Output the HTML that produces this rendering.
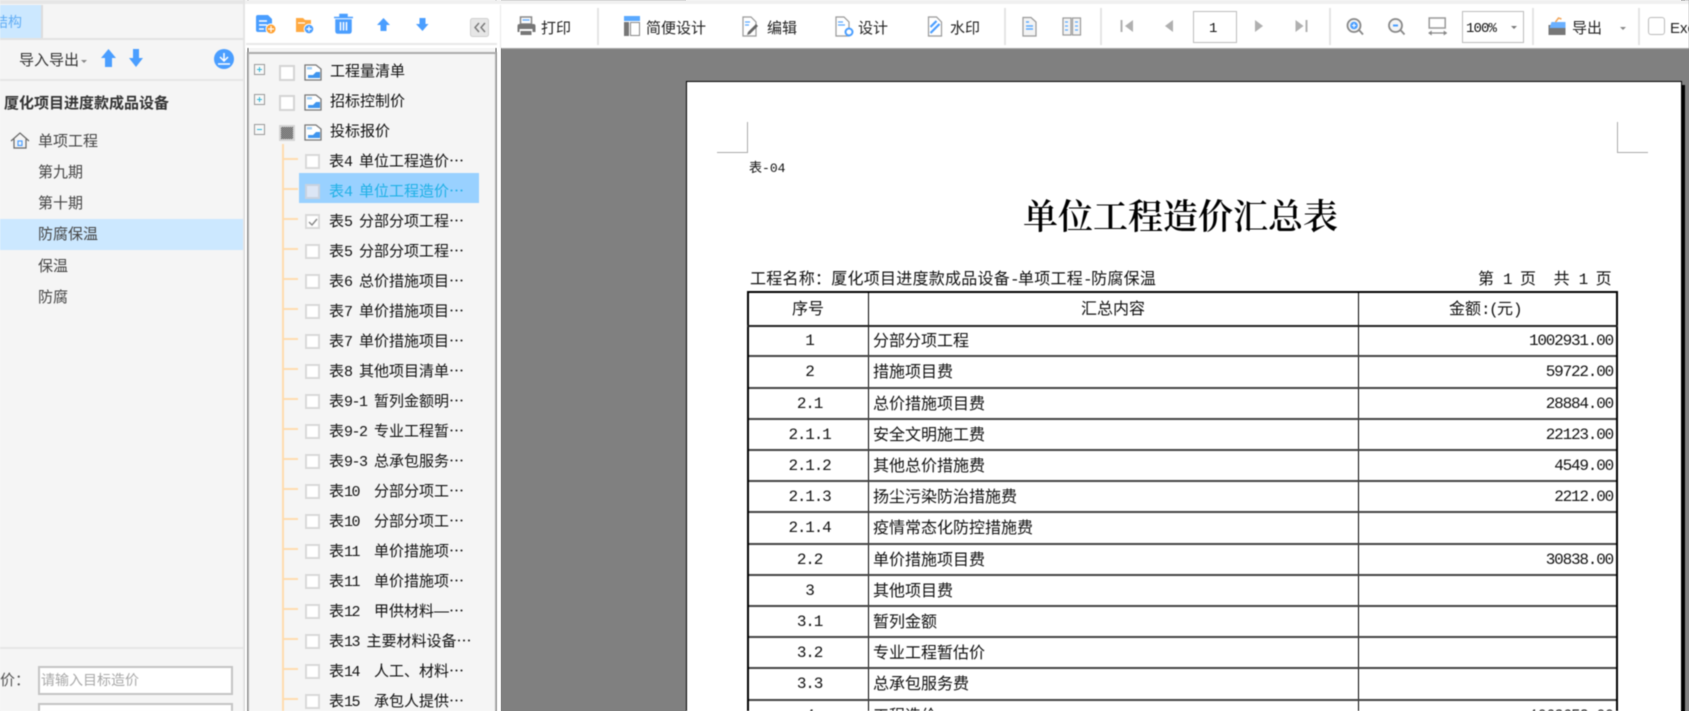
<!DOCTYPE html>
<html lang="zh-CN"><head><meta charset="utf-8"><title>单位工程造价汇总表</title>
<style>
html,body{margin:0;padding:0;width:1689px;height:711px;overflow:hidden;background:#fff}
#under{position:absolute;left:0;top:0;width:1689px;height:711px;background:linear-gradient(90deg,#f5f5f5 0 243px,#e4e4e4 243px 245px,#fff 245px 247px,#ababab 247px 249px,#f5f5f5 249px 495px,#ababab 495px 497px,#fff 497px 501px,#808080 501px 686px,#fff 686px 1681px,#000 1681px 1685px,#808080 1685px)}
#root{position:absolute;left:0;top:0;width:1689px;height:711px;overflow:hidden;font-family:"Liberation Sans","Noto Sans CJK SC",sans-serif;filter:blur(.4px)}
.a{position:absolute}
.t{position:absolute;white-space:pre;line-height:1;color:#333}
i{font-style:normal;font-family:"Liberation Mono",monospace;font-size:1em;letter-spacing:-.1em}
.f15{font-size:15px}.f13{font-size:15px;color:#222}
.row{position:absolute;left:282px;width:200px;height:30px}
.row:before{content:"";position:absolute;left:0;top:11px;width:16px;height:2px;background:#ffdcae}
.row .c{position:absolute;left:23px;top:7px;width:11px;height:11px;border:2px solid #d9d9d9;background:#fff}
.row .x{position:absolute;left:47px;top:7px;font-size:15px;line-height:15px;white-space:pre;color:#111}
.r{height:31.2px;position:relative}
.r span{position:absolute;top:1px;line-height:31.2px;white-space:pre;color:#111;font-size:16px}
.r span:nth-child(1),.r span:nth-child(3){font-family:"Liberation Mono",monospace;font-size:16px;letter-spacing:-1.2px}
.r span:nth-child(1){left:0;width:121px;text-align:center}
.r span:nth-child(2){left:124px}
.r span:nth-child(3){right:3px}
.r:after{content:"";position:absolute;left:0;right:0;bottom:-1px;height:2px;background:#444}
</style></head><body><div id="under"></div><div id="root">

<!-- panel backgrounds -->
<div class="a" style="left:0;top:0;width:243px;height:711px;background:#f5f5f5"></div>
<div class="a" style="left:0;top:0;width:243px;height:4px;background:#e6e6e6"></div>
<div class="a" style="left:243px;top:0;width:2px;height:711px;background:#e4e4e4"></div>
<div class="a" style="left:245px;top:0;width:1444px;height:4px;background:#f0f0f0"></div>
<div class="a" style="left:245px;top:4px;width:1444px;height:44px;background:#fff"></div>
<div class="a" style="left:0;top:5px;width:41px;height:33px;background:#cce8ff;border-right:2px solid #dcdcdc"></div>
<div class="a" style="left:0;top:38px;width:243px;height:2px;background:#e3e3e3"></div>
<div class="a" style="left:0;top:79px;width:243px;height:2px;background:#e6e6e6"></div>
<div class="a" style="left:0;top:219px;width:243px;height:31px;background:#cce8ff"></div>
<div class="a" style="left:0;top:647px;width:243px;height:2px;background:#e6e6e6"></div>

<div class="t" style="left:-6px;top:15px;font-size:14px;color:#63aef5">结构</div>
<div class="t f15" style="left:19px;top:53px">导入导出</div>
<div class="t f15" style="left:4px;top:96px;font-weight:700;color:#333">厦化项目进度款成品设备</div>
<div class="t f15" style="left:38px;top:134px;color:#444">单项工程</div>
<div class="t f15" style="left:38px;top:165px;color:#444">第九期</div>
<div class="t f15" style="left:38px;top:196px;color:#444">第十期</div>
<div class="t f15" style="left:38px;top:227px;color:#444">防腐保温</div>
<div class="t f15" style="left:38px;top:259px;color:#444">保温</div>
<div class="t f15" style="left:38px;top:290px;color:#444">防腐</div>
<div class="t f15" style="left:0;top:673px;color:#555">价：</div>
<div class="a" style="left:38px;top:666px;width:191px;height:25px;border:2px solid #c4c4c4;background:#fff"></div>
<div class="t" style="left:41px;top:673px;font-size:14px;color:#a8a8a8">请输入目标造价</div>
<div class="a" style="left:38px;top:703px;width:191px;height:6px;border:2px solid #c4c4c4;border-bottom:0;background:#fff;overflow:hidden"><div class="t" style="left:3px;top:4px;font-size:14px;color:#aaa;line-height:14px">1064651</div></div>

<!-- middle panel -->
<div class="a" style="left:246px;top:43px;width:251px;height:2px;background:#e8e8e8"></div>
<div class="a" style="left:247px;top:52px;width:246px;height:657px;border:2px solid #ababab;border-bottom:0;background:#f5f5f5"></div>
<div class="a" style="left:282px;top:144px;width:2px;height:567px;background:#ffdcae"></div>
<div class="t f15" style="left:330px;top:64px;color:#111">工程量清单</div>
<div class="t f15" style="left:330px;top:94px;color:#111">招标控制价</div>
<div class="t f15" style="left:330px;top:124px;color:#111">投标报价</div>
<div class="a" style="left:279px;top:65px;width:12px;height:12px;border:2px solid #d4d4d4;background:#fff"></div>
<div class="a" style="left:279px;top:95px;width:12px;height:12px;border:2px solid #d4d4d4;background:#fff"></div>
<div class="a" style="left:279px;top:125px;width:12px;height:12px;border:2px solid #d4d4d4;background:repeating-conic-gradient(#444 0 25%,#bbb 0 50%) 0 0/2px 2px"></div>
<div class="a" style="left:299px;top:173px;width:180px;height:30px;background:#99d1ff"></div>

<div class="row" style="top:147px"><div class="c"></div><div class="x">表<i>4 </i>单位工程造价⋯</div></div>
<div class="row" style="top:177px"><div class="c" style="background:#dce6f5;border-color:#c8d2e0"></div><div class="x" style="color:#1fb0e6">表<i>4 </i>单位工程造价⋯</div></div>
<div class="row" style="top:207px"><div class="c"></div><div class="x">表<i>5 </i>分部分项工程⋯</div></div>
<div class="row" style="top:237px"><div class="c"></div><div class="x">表<i>5 </i>分部分项工程⋯</div></div>
<div class="row" style="top:267px"><div class="c"></div><div class="x">表<i>6 </i>总价措施项目⋯</div></div>
<div class="row" style="top:297px"><div class="c"></div><div class="x">表<i>7 </i>单价措施项目⋯</div></div>
<div class="row" style="top:327px"><div class="c"></div><div class="x">表<i>7 </i>单价措施项目⋯</div></div>
<div class="row" style="top:357px"><div class="c"></div><div class="x">表<i>8 </i>其他项目清单⋯</div></div>
<div class="row" style="top:387px"><div class="c"></div><div class="x">表<i>9-1 </i>暂列金额明⋯</div></div>
<div class="row" style="top:417px"><div class="c"></div><div class="x">表<i>9-2 </i>专业工程暂⋯</div></div>
<div class="row" style="top:447px"><div class="c"></div><div class="x">表<i>9-3 </i>总承包服务⋯</div></div>
<div class="row" style="top:477px"><div class="c"></div><div class="x">表<i>10  </i>分部分项工⋯</div></div>
<div class="row" style="top:507px"><div class="c"></div><div class="x">表<i>10  </i>分部分项工⋯</div></div>
<div class="row" style="top:537px"><div class="c"></div><div class="x">表<i>11  </i>单价措施项⋯</div></div>
<div class="row" style="top:567px"><div class="c"></div><div class="x">表<i>11  </i>单价措施项⋯</div></div>
<div class="row" style="top:597px"><div class="c"></div><div class="x">表<i>12  </i>甲供材料—⋯</div></div>
<div class="row" style="top:627px"><div class="c"></div><div class="x">表<i>13 </i>主要材料设备⋯</div></div>
<div class="row" style="top:657px"><div class="c"></div><div class="x">表<i>14  </i>人工、材料⋯</div></div>
<div class="row" style="top:687px;height:24px"><div class="c"></div><div class="x">表<i>15  </i>承包人提供⋯</div></div>

<!-- report toolbar -->
<div class="a" style="left:500px;top:5px;width:1px;height:43px;background:#e8e8e8"></div>
<div class="a" style="left:501px;top:48px;width:1188px;height:663px;background:#808080"></div>
<div class="a" style="left:501px;top:48px;width:1188px;height:1px;background:#a4a4a4"></div>
<div class="a" style="left:597px;top:8px;width:2px;height:37px;background:#e4e4e4"></div>
<div class="a" style="left:1004px;top:8px;width:2px;height:37px;background:#e4e4e4"></div>
<div class="a" style="left:1100px;top:8px;width:2px;height:37px;background:#e4e4e4"></div>
<div class="a" style="left:1329px;top:8px;width:2px;height:37px;background:#e4e4e4"></div>
<div class="a" style="left:1532px;top:8px;width:2px;height:37px;background:#e4e4e4"></div>
<div class="a" style="left:1638px;top:8px;width:2px;height:37px;background:#e4e4e4"></div>
<div class="t f13" style="left:541px;top:21px">打印</div>
<div class="t f13" style="left:646px;top:21px">简便设计</div>
<div class="t f13" style="left:767px;top:21px">编辑</div>
<div class="t f13" style="left:858px;top:21px">设计</div>
<div class="t f13" style="left:950px;top:21px">水印</div>
<div class="a" style="left:1193px;top:11px;width:42px;height:30px;border:1px solid #bdbdbd;background:#fff"></div>
<div class="t" style="left:1209px;top:22px;font:14px/1 'Liberation Mono',monospace;color:#111">1</div>
<div class="a" style="left:1462px;top:11px;width:60px;height:30px;border:1px solid #bdbdbd;background:#fff"></div>
<div class="t" style="left:1466px;top:22px;font:14px/1 'Liberation Mono',monospace;color:#111;letter-spacing:-.9px">100%</div>
<div class="t f13" style="left:1572px;top:21px">导出</div>
<div class="a" style="left:1648px;top:17px;width:15px;height:16px;border:1px solid #bbb;border-radius:3px;background:#fff"></div>
<div class="t" style="left:1670px;top:21px;font-size:15px;color:#222">Excel</div>

<!-- page -->
<div class="a" style="left:686px;top:81px;width:994px;height:630px;background:#fff;border:1px solid #000;border-bottom:0"></div>
<div class="a" style="left:1681px;top:85px;width:4px;height:626px;background:#000"></div>
<div class="a" style="left:747px;top:122px;width:1px;height:31px;background:#aaa"></div>
<div class="a" style="left:717px;top:152px;width:31px;height:1px;background:#aaa"></div>
<div class="a" style="left:1617px;top:122px;width:1px;height:31px;background:#aaa"></div>
<div class="a" style="left:1617px;top:152px;width:31px;height:1px;background:#aaa"></div>
<div class="t" style="left:749px;top:161px;font-size:13px;color:#111">表<i style="letter-spacing:0">-04</i></div>
<div class="t" style="left:1023px;top:200px;font-size:35px;color:#000;font-family:'Liberation Serif','Noto Serif CJK SC',serif;font-weight:600">单位工程造价汇总表</div>
<div class="t" style="left:750px;top:272px;font-size:16px;letter-spacing:.25px;color:#111">工程名称：厦化项目进度款成品设备<i>-</i>单项工程<i>-</i>防腐保温</div>
<div class="t" style="left:1478px;top:272px;font-size:16px;letter-spacing:.5px;color:#111">第<i style="letter-spacing:-1.1px"> 1 </i>页<i style="letter-spacing:-1.1px">  </i>共<i style="letter-spacing:-1.1px"> 1 </i>页</div>

<!-- table -->
<div class="a" style="left:747px;top:291px;width:871px;height:2px;background:#000"></div>
<div class="a" style="left:747px;top:291px;width:2px;height:420px;background:#000"></div>
<div class="a" style="left:1616px;top:291px;width:2px;height:420px;background:#000"></div>
<div class="a" style="left:868px;top:291px;width:1px;height:420px;background:#000"></div>
<div class="a" style="left:1358px;top:291px;width:1px;height:420px;background:#000"></div>
<div class="a" style="left:747px;top:325px;width:871px;height:2px;background:#222"></div>
<div class="t" style="left:792px;top:302px;font-size:16px;color:#111">序号</div>
<div class="t" style="left:1081px;top:302px;font-size:16px;color:#111">汇总内容</div>
<div class="t" style="left:1449px;top:302px;font-size:16px;color:#111">金额<i>:(</i>元<i>)</i></div>
<div class="a" style="left:749px;top:325.3px;width:867px;height:385.7px;overflow:hidden">
<div class="r"><span>1</span><span>分部分项工程</span><span>1002931.00</span></div>
<div class="r"><span>2</span><span>措施项目费</span><span>59722.00</span></div>
<div class="r"><span>2.1</span><span>总价措施项目费</span><span>28884.00</span></div>
<div class="r"><span>2.1.1</span><span>安全文明施工费</span><span>22123.00</span></div>
<div class="r"><span>2.1.2</span><span>其他总价措施费</span><span>4549.00</span></div>
<div class="r"><span>2.1.3</span><span>扬尘污染防治措施费</span><span>2212.00</span></div>
<div class="r"><span>2.1.4</span><span>疫情常态化防控措施费</span><span></span></div>
<div class="r"><span>2.2</span><span>单价措施项目费</span><span>30838.00</span></div>
<div class="r"><span>3</span><span>其他项目费</span><span></span></div>
<div class="r"><span>3.1</span><span>暂列金额</span><span></span></div>
<div class="r"><span>3.2</span><span>专业工程暂估价</span><span></span></div>
<div class="r"><span>3.3</span><span>总承包服务费</span><span></span></div>
<div class="r"><span>4</span><span>工程造价</span><span>1062653.00</span></div>
</div>

<!-- icons -->
<svg class="a" style="left:0;top:0" width="1689" height="711" viewBox="0 0 1689 711">
<!-- left toolbar -->
<path d="M81 60h6l-3 3z" fill="#888"/>
<path d="M108.500 49L116 58H112V67H105V58H101Z" fill="#4a9eff"/>
<path d="M133 49H139V58H143L136 67L129 58H133Z" fill="#4a9eff"/>
<circle cx="224" cy="59" r="10" fill="#4a9eff"/>
<path d="M224 53v7M220 57l4 4 4-4M218 64h12" fill="none" stroke="#fff" stroke-width="1.500"/>
<path d="M11 141L20 133L29 141M14 139V148H26V139" fill="none" stroke="#666" stroke-width="1.200"/>
<rect x="18" y="141" width="4" height="4.500" fill="none" stroke="#4a9eff" stroke-width="1.200"/>
<!-- middle toolbar -->
<path d="M258 15H268L272 19V32H258Q256 32 256 30V17Q256 15 258 15Z" fill="#4a9eff"/>
<path d="M259 21h8M259 25h8M259 29h5" stroke="#fff" stroke-width="1.400"/>
<circle cx="271" cy="29" r="5" fill="#ff9f2e" stroke="#fff"/><path d="M268 29h6M271 26v6" stroke="#fff" stroke-width="1.200"/>
<path d="M296 18H303L305 20H311V32H296Z" fill="#ffa940"/><path d="M298 23h7" stroke="#fff" stroke-width="1.200"/>
<circle cx="309" cy="29" r="4.800" fill="#4a9eff" stroke="#fff"/><path d="M306.500 29h5M309 26.500v5" stroke="#fff" stroke-width="1.200"/>
<path d="M340 17V14.500H347V17M334 17.500H353M336 20H351V31Q351 33 349 33H338Q336 33 336 31Z" fill="#4a9eff" stroke="#4a9eff" stroke-width="1.500"/>
<path d="M340.500 22v8.500M343.500 22v8.500M346.500 22v8.500" stroke="#fff" stroke-width="1.500"/>
<path d="M383.500 18L390 25H386.500V31H380.500V25H377Z" fill="#4a9eff"/>
<path d="M419.500 18H425.500V24H428.500L422.500 31L416 24H419.500Z" fill="#4a9eff"/>
<rect x="470.500" y="18.500" width="18" height="18" rx="2" fill="#e6e6e6" stroke="#d0d0d0"/>
<path d="M479 23l-4 4.500 4 4.500M485 23l-4 4.500 4 4.500" fill="none" stroke="#777" stroke-width="1.400"/>
<!-- tree expanders -->
<g fill="#f8f8f8" stroke="#999"><rect x="254.500" y="64.500" width="10" height="10"/><rect x="254.500" y="94.500" width="10" height="10"/><rect x="254.500" y="124.500" width="10" height="10"/></g>
<path d="M257 69.500h5M259.500 67v5M257 99.500h5M259.500 97v5" stroke="#2fb6d8"/><path d="M257 129.500h5" stroke="#2fb6d8"/>
<!-- tree folder icons -->
<g><path d="M305 65H316L321 69V80H305Z" fill="#fff" stroke="#777" stroke-width="1.300"/><path d="M307 67h5v2.500h-5z" fill="#9fcff7"/><path d="M308 78V75H313L316 72H320V78Z" fill="#3f95ee"/></g>
<g transform="translate(0,30)"><path d="M305 65H316L321 69V80H305Z" fill="#fff" stroke="#777" stroke-width="1.300"/><path d="M307 67h5v2.500h-5z" fill="#9fcff7"/><path d="M308 78V75H313L316 72H320V78Z" fill="#3f95ee"/></g>
<g transform="translate(0,60)"><path d="M305 65H316L321 69V80H305Z" fill="#fff" stroke="#777" stroke-width="1.300"/><path d="M307 67h5v2.500h-5z" fill="#9fcff7"/><path d="M308 78V75H313L316 72H320V78Z" fill="#3f95ee"/></g>
<!-- check -->
<path d="M309 222l3 3 5-6" fill="none" stroke="#888" stroke-width="1.400"/>
<!-- print -->
<g transform="translate(3.500,0)"><path d="M517 17h11v7h-11z" fill="#fff" stroke="#888" stroke-width="1.500"/><path d="M519 20h7" stroke="#6ab0ff" stroke-width="1.500"/>
<path d="M516 24H530Q532 24 532 26V32H529V29H516V32H514V26Q514 24 516 24Z" fill="#777"/><path d="M517 31h11v4h-11z" fill="#777"/></g>
<!-- simple design -->
<g transform="translate(18,0)"><rect x="606" y="16" width="16" height="5" fill="#5aa9ff"/><rect x="606" y="22" width="5" height="14" fill="#777"/><rect x="612.500" y="22.500" width="9" height="13" fill="none" stroke="#888"/></g>
<!-- edit -->
<g transform="translate(32,0)"><path d="M711 17H719L724 22V36H711Z" fill="#fff" stroke="#999" stroke-width="1.200"/><path d="M713 22h5M713 25h4" stroke="#5aa9ff" stroke-width="1.300"/><path d="M716 32l8-8 2 2-8 8-3 1z" fill="#666"/></g>
<!-- design -->
<g transform="translate(44,0)"><path d="M792 17H800L805 22V36H792Z" fill="#fff" stroke="#999" stroke-width="1.200"/><path d="M794 22h5M794 25h7" stroke="#5aa9ff" stroke-width="1.300"/><circle cx="805" cy="32" r="3.500" fill="#fff" stroke="#4a9eff" stroke-width="2"/></g>
<!-- watermark -->
<g transform="translate(56.500,0)"><path d="M872 17H880L885 22V36H872Z" fill="#fff" stroke="#999" stroke-width="1.200"/><path d="M874 27l6-6M874 33l9-9" stroke="#4a9eff" stroke-width="2.200"/></g>
<!-- single/double page -->
<g transform="translate(67,0)"><path d="M956 17.500H964L969 22V36H956Z" fill="#f4f4f4" stroke="#999" stroke-width="1.200"/><path d="M959 22h3M959 26h7M959 29h7" stroke="#5aa9ff" stroke-width="1.500"/></g>
<g transform="translate(73,0)"><rect x="990" y="18" width="8" height="17" fill="#f4f4f4" stroke="#999" stroke-width="1.200"/><rect x="999.500" y="18" width="8" height="17" fill="#f4f4f4" stroke="#999" stroke-width="1.200"/><path d="M992 22h3M992 26h3M992 30h3M1002 22h3M1002 26h3M1002 30h3" stroke="#5aa9ff" stroke-width="1.200"/></g>
<!-- navigation -->
<g fill="#b0b0b0"><rect x="1120.500" y="20" width="2" height="12"/><path d="M1133 20v12l-8-6z"/><path d="M1173 20v12l-8-6z"/><path d="M1255 20v12l8-6z"/><path d="M1295.500 20v12l8-6z"/><rect x="1305.500" y="20" width="2" height="12"/></g>
<!-- zoom -->
<g transform="translate(34,0)"><circle cx="1320" cy="25.500" r="6.500" fill="#f4f4f4" stroke="#888" stroke-width="1.800"/><circle cx="1320" cy="25.500" r="3.800" fill="#4a9eff"/><path d="M1318 25.500h4M1320 23.500v4" stroke="#fff"/><path d="M1325 30l4 4.500" stroke="#888" stroke-width="1.800"/></g>
<g transform="translate(38.500,0)"><circle cx="1357" cy="25.500" r="6.500" fill="#f4f4f4" stroke="#888" stroke-width="1.800"/><path d="M1354.500 25.500h5" stroke="#4a9eff" stroke-width="2"/><path d="M1362 30l4 4.500" stroke="#888" stroke-width="1.800"/></g>
<g transform="translate(42.700,0)"><rect x="1386.500" y="18" width="16" height="10" fill="#fff" stroke="#999" stroke-width="1.500"/><path d="M1386 33h18" stroke="#888" stroke-width="1.300"/><path d="M1389 30.500l-3.500 2.500 3.500 2.500zM1401 30.500l3.500 2.500-3.500 2.500z" fill="#888"/></g>
<path d="M1511 26h6l-3 3z" fill="#777"/>
<!-- export -->
<g transform="translate(59.500,0)"><path d="M1489 25H1506V35H1489Z" fill="#777"/><path d="M1492 22H1506V28H1490Z" fill="#6ab0ff"/><path d="M1496 22l3-4 3 1" fill="none" stroke="#f2a55a" stroke-width="1.500"/></g>
<path d="M1620 27h6l-3 3z" fill="#888"/>
</svg>
</div></body></html>
